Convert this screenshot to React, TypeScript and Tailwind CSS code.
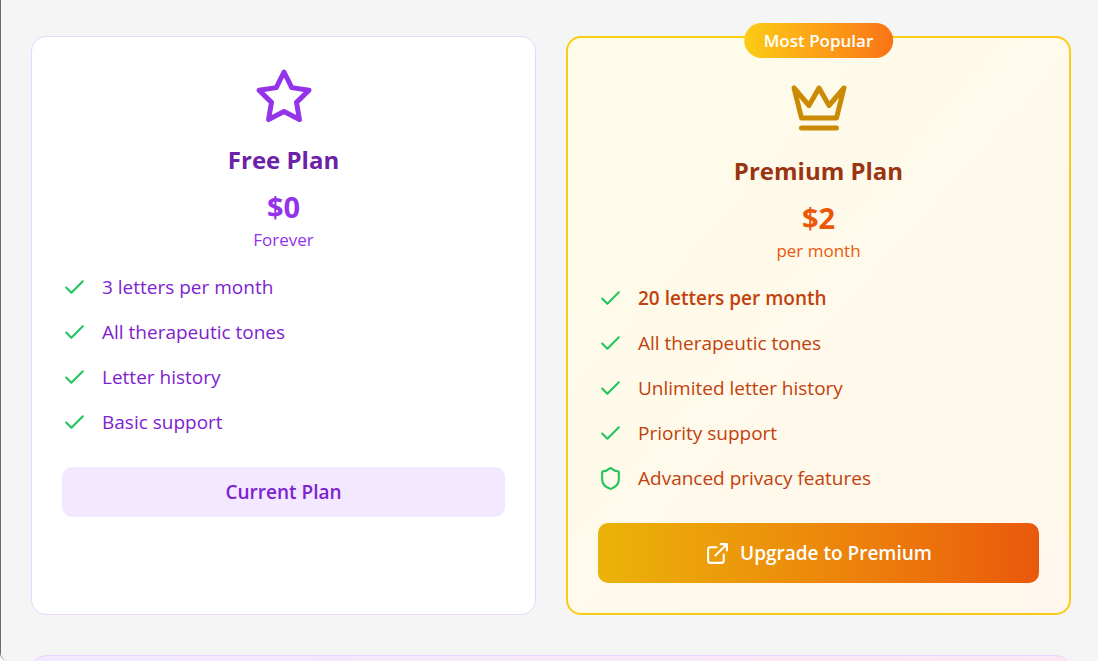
import type { ReactNode } from 'react'

type IconName = 'check' | 'shield'

interface Feature {
  label: string
  icon?: IconName
  strong?: boolean
}

const FREE_FEATURES: Feature[] = [
  { label: '3 letters per month' },
  { label: 'All therapeutic tones' },
  { label: 'Letter history' },
  { label: 'Basic support' },
]

const PREMIUM_FEATURES: Feature[] = [
  { label: '20 letters per month', strong: true },
  { label: 'All therapeutic tones' },
  { label: 'Unlimited letter history' },
  { label: 'Priority support' },
  { label: 'Advanced privacy features', icon: 'shield' },
]

function Icon({ className, children }: { className: string; children: ReactNode }) {
  return (
    <svg
      className={className}
      viewBox="0 0 24 24"
      fill="none"
      stroke="currentColor"
      strokeWidth="2"
      strokeLinecap="round"
      strokeLinejoin="round"
      aria-hidden="true"
    >
      {children}
    </svg>
  )
}

function FeatureList({ features, className }: { features: Feature[]; className: string }) {
  return (
    <ul className={`mb-[30px] flex flex-col gap-[15px] text-[19px] leading-[30px] ${className}`}>
      {features.map(f => (
        <li key={f.label} className="flex items-center gap-[15px]">
          <Icon className="size-[25px] shrink-0 text-[#22c55e]">
            {f.icon === 'shield' ? (
              <path d="M20 13c0 5-3.5 7.500-7.660 8.950a1 1 0 0 1-.67-.01C7.500 20.500 4 18 4 13V6a1 1 0 0 1 1-1c2 0 4.500-1.200 6.240-2.720a1.170 1.170 0 0 1 1.520 0C14.510 3.810 17 5 19 5a1 1 0 0 1 1 1z" />
            ) : (
              <path d="M20 6 9 17l-5-5" />
            )}
          </Icon>
          <span className={f.strong ? 'font-semibold' : ''}>{f.label}</span>
        </li>
      ))}
    </ul>
  )
}

export default function App() {
  return (
    <main className="h-screen overflow-y-auto rounded-bl-lg border-l border-[#6b6b6b] bg-[#f5f5f5] pt-9 pr-[27px] pl-[30px] font-['Open_Sans','Noto_Sans',sans-serif] [scrollbar-width:none]">
      <div className="mb-10 grid grid-cols-2 gap-[30px]">
        <section className="rounded-[15px] border border-[#e9d5ff] bg-white p-[30px]">
          <div className="mb-5 flex flex-col items-center text-center">
            <Icon className="mb-[15px] size-[60px] text-[#9333ea]">
              <polygon points="12 2 15.09 8.26 22 9.27 17 14.14 18.18 21.02 12 17.77 5.82 21.02 7 14.14 2 9.27 8.91 8.26 12 2" />
            </Icon>
            <h3 className="mb-[10px] text-2xl leading-[35px] font-bold text-[#6b21a8]">Free Plan</h3>
            <p className="text-[29px] leading-[40px] font-bold text-[#9333ea]">$0</p>
            <p className="text-[17px] leading-[25px] text-[#9333ea]">Forever</p>
          </div>
          <FeatureList features={FREE_FEATURES} className="text-[#7e22ce]" />
          <button
            type="button"
            className="flex w-full items-center justify-center rounded-[10px] bg-[#f3e8ff] py-[10px] text-[19px] leading-[30px] font-semibold text-[#7e22ce]"
          >
            Current Plan
          </button>
        </section>

        <section className="relative rounded-[15px] border-2 border-[#facc15] bg-linear-to-br from-[#fefce8] to-[#fff7ed] p-[30px]">
          <span className="absolute -top-[15px] left-1/2 -translate-x-1/2 rounded-full bg-linear-to-r from-[#facc15] to-[#f97316] px-5 py-[5px] text-[17px] leading-[25px] font-semibold whitespace-nowrap text-white">
            Most Popular
          </span>
          <div className="mb-5 flex flex-col items-center pt-[10px] text-center">
            <Icon className="mb-[15px] size-[60px] text-[#ca8a04]">
              <path d="m2 4 3 12h14l3-12-6 7-4-7-4 7-6-7zm3 16h14" />
            </Icon>
            <h3 className="mb-[10px] text-2xl leading-[35px] font-bold text-[#9a3412]">Premium Plan</h3>
            <p className="text-[29px] leading-[40px] font-bold text-[#ea580c]">$2</p>
            <p className="text-[17px] leading-[25px] text-[#ea580c]">per month</p>
          </div>
          <FeatureList features={PREMIUM_FEATURES} className="text-[#c2410c]" />
          <button
            type="button"
            className="flex w-full items-center justify-center gap-[10px] rounded-[10px] bg-linear-to-r from-[#eab308] to-[#ea580c] py-[15px] text-[19px] leading-[30px] font-semibold text-white"
          >
            <Icon className="size-[25px] shrink-0">
              <path d="M15 3h6v6M10 14 21 3M18 13v6a2 2 0 0 1-2 2H5a2 2 0 0 1-2-2V8a2 2 0 0 1 2-2h6" />
            </Icon>
            Upgrade to Premium
          </button>
        </section>
      </div>

      <div className="h-32 rounded-[15px] border border-[#e9d5ff] bg-linear-to-r from-[#f3e8ff] to-[#fce7f3]" />
    </main>
  )
}
